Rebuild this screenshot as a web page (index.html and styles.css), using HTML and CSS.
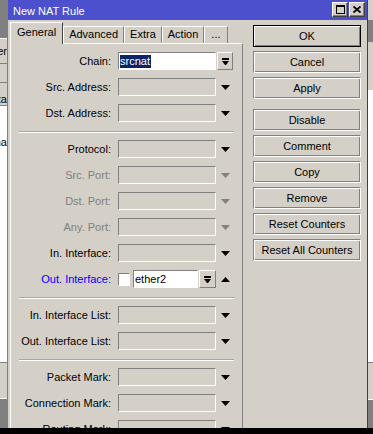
FILE: index.html
```html
<!DOCTYPE html>
<html lang="en">
  <head>
    <meta charset="UTF-8" />
    <title>New NAT Rule</title>
    <link rel="stylesheet" href="styles.css">
  </head>
  <body>
    <div class="screen">
      <div class="bg-left">
        <div class="bg-head"></div>
        <div class="bg-row">Filter</div>
        <div class="bg-band"></div>
        <div class="bg-row bg-row-low">Data</div>
        <div class="bg-list"><span class="bg-text">Dna</span></div>
        <div class="bg-panel"></div>
        <div class="bg-foot"></div>
      </div>

      <div class="window">
        <div class="titlebar">
          <span class="title">New NAT Rule</span>
          <div class="title-buttons">
            <span class="tbtn">
              <svg width="9" height="9" viewBox="0 0 9 9">
                <rect x="0" y="0" width="9" height="2" />
                <rect x="0" y="0" width="1" height="9" />
                <rect x="8" y="0" width="1" height="9" />
                <rect x="0" y="8" width="9" height="1" />
              </svg>
            </span>
            <span class="tbtn">
              <svg width="8" height="7" viewBox="0 0 8 7">
                <path d="M0.5 0.5L7.5 6.5M7.5 0.5L0.5 6.5" stroke="#000" stroke-width="1.8" />
              </svg>
            </span>
          </div>
        </div>

        <div class="body">
          <div class="editor">
            <div class="tabs">
              <span class="tab active">General</span>
              <span class="tab">Advanced</span>
              <span class="tab">Extra</span>
              <span class="tab">Action</span>
              <span class="tab tab-more">...</span>
            </div>
            <div class="panel">
              <div class="row">
                <span class="label">Chain:</span>
                <span class="field field-white"><span class="selected">srcnat</span></span>
                <span class="drop-btn">
                  <svg width="7" height="7" viewBox="0 0 7 7"><rect width="7" height="2" /><polygon points="0,3 7,3 4,7 3,7" /></svg>
                </span>
              </div>
              <div class="row">
                <span class="label">Src. Address:</span>
                <span class="field"></span>
                <svg class="arrow" width="9" height="5" viewBox="0 0 9 5"><polygon points="0,0 9,0 4.5,5" /></svg>
              </div>
              <div class="row">
                <span class="label">Dst. Address:</span>
                <span class="field"></span>
                <svg class="arrow" width="9" height="5" viewBox="0 0 9 5"><polygon points="0,0 9,0 4.5,5" /></svg>
              </div>
              <div class="sep"></div>

              <div class="row">
                <span class="label">Protocol:</span>
                <span class="field"></span>
                <svg class="arrow" width="9" height="5" viewBox="0 0 9 5"><polygon points="0,0 9,0 4.5,5" /></svg>
              </div>
              <div class="row disabled">
                <span class="label">Src. Port:</span>
                <span class="field"></span>
                <svg class="arrow" width="9" height="5" viewBox="0 0 9 5"><polygon points="0,0 9,0 4.5,5" /></svg>
              </div>
              <div class="row disabled">
                <span class="label">Dst. Port:</span>
                <span class="field"></span>
                <svg class="arrow" width="9" height="5" viewBox="0 0 9 5"><polygon points="0,0 9,0 4.5,5" /></svg>
              </div>
              <div class="row disabled">
                <span class="label">Any. Port:</span>
                <span class="field"></span>
                <svg class="arrow" width="9" height="5" viewBox="0 0 9 5"><polygon points="0,0 9,0 4.5,5" /></svg>
              </div>
              <div class="row">
                <span class="label">In. Interface:</span>
                <span class="field"></span>
                <svg class="arrow" width="9" height="5" viewBox="0 0 9 5"><polygon points="0,0 9,0 4.5,5" /></svg>
              </div>
              <div class="row">
                <span class="label label-blue">Out. Interface:</span>
                <span class="check"></span>
                <span class="field field-white field-short">ether2</span>
                <span class="drop-btn drop-btn-wide">
                  <svg width="7" height="7" viewBox="0 0 7 7"><rect width="7" height="2" /><polygon points="0,3 7,3 4,7 3,7" /></svg>
                </span>
                <svg class="arrow" width="9" height="5" viewBox="0 0 9 5"><polygon points="0,5 9,5 4.5,0" /></svg>
              </div>
              <div class="sep"></div>

              <div class="row">
                <span class="label">In. Interface List:</span>
                <span class="field"></span>
                <svg class="arrow" width="9" height="5" viewBox="0 0 9 5"><polygon points="0,0 9,0 4.5,5" /></svg>
              </div>
              <div class="row">
                <span class="label">Out. Interface List:</span>
                <span class="field"></span>
                <svg class="arrow" width="9" height="5" viewBox="0 0 9 5"><polygon points="0,0 9,0 4.5,5" /></svg>
              </div>
              <div class="sep"></div>

              <div class="row">
                <span class="label">Packet Mark:</span>
                <span class="field"></span>
                <svg class="arrow" width="9" height="5" viewBox="0 0 9 5"><polygon points="0,0 9,0 4.5,5" /></svg>
              </div>
              <div class="row">
                <span class="label">Connection Mark:</span>
                <span class="field"></span>
                <svg class="arrow" width="9" height="5" viewBox="0 0 9 5"><polygon points="0,0 9,0 4.5,5" /></svg>
              </div>
              <div class="row">
                <span class="label">Routing Mark:</span>
                <span class="field"></span>
                <svg class="arrow" width="9" height="5" viewBox="0 0 9 5"><polygon points="0,0 9,0 4.5,5" /></svg>
              </div>
            </div>
          </div>

          <div class="actions">
            <button class="btn btn-default">OK</button>
            <button class="btn">Cancel</button>
            <button class="btn">Apply</button>
            <button class="btn btn-split">Disable</button>
            <button class="btn">Comment</button>
            <button class="btn">Copy</button>
            <button class="btn">Remove</button>
            <button class="btn">Reset Counters</button>
            <button class="btn">Reset All Counters</button>
          </div>
        </div>
      </div>

      <div class="bg-right">
        <div class="bgr-top"></div>
        <div class="bgr-dark"></div>
        <div class="bgr-grey"></div>
        <div class="bgr-list"></div>
        <div class="bgr-panel"></div>
        <div class="bg-foot"></div>
      </div>
    </div>
    <div class="taskbar"></div>
  </body>
</html>
```

FILE: styles.css
```css
body {
  margin: 0;
  background: #808080;
  font-family: "Liberation Sans", Arial, sans-serif;
  font-size: 11px;
  color: #000;
}
.screen {
  display: flex;
  height: 428px;
  overflow: hidden;
}
.taskbar {
  height: 6px;
  background: #000;
}

/* desktop behind the dialog */
.bg-left,
.bg-right {
  display: flex;
  flex-direction: column;
  overflow: hidden;
  white-space: nowrap;
}
.bg-left {
  width: 7px;
}
.bg-right {
  width: 5px;
}
.bg-head {
  height: 38px;
  background: #808080;
}
.bg-row {
  height: 24px;
  display: flex;
  justify-content: flex-end;
  align-items: center;
  background: #d4d0c8;
  border-top: 1px solid #fff;
}
.bg-row-low {
  border-top: 1px solid #808080;
  border-bottom: 1px solid #808080;
  height: 22px;
  align-items: flex-end;
}
.bg-band {
  height: 18px;
  background: #d4d0c8;
  border-top: 1px solid #808080;
}
.bg-list {
  height: 256px;
  background: #fff;
  display: flex;
  justify-content: flex-end;
  align-items: flex-start;
}
.bg-text {
  margin-top: 30px;
}
.bg-panel {
  height: 35px;
  background: #d4d0c8;
  border-top: 1px solid #808080;
}
.bg-foot {
  flex: 1;
  background: #808080;
  border-top: 1px solid #fff;
}
.bgr-top {
  height: 20px;
  background: #d4d0c8;
}
.bgr-dark {
  height: 22px;
  background: #808080;
}
.bgr-grey {
  height: 48px;
  background: #d4d0c8;
}
.bgr-list {
  height: 272px;
  background: #fff;
}
.bgr-panel {
  height: 36px;
  background: #d4d0c8;
  border-top: 1px solid #808080;
}

/* dialog */
.window {
  width: 359px;
  border-left: 1px solid #808080;
  border-right: 1px solid #404040;
  background: #d4d0c8;
  display: flex;
  flex-direction: column;
  overflow: hidden;
}
.titlebar {
  height: 20px;
  flex-shrink: 0;
  background: #4c50cc;
  display: flex;
  align-items: center;
  justify-content: space-between;
  padding: 0 2px 0 5px;
}
.title {
  color: #fff;
  padding-top: 1px;
}
.title-buttons {
  display: flex;
  gap: 1px;
  margin-top: -1px;
}
.tbtn {
  width: 16px;
  height: 15px;
  box-sizing: border-box;
  background: #d4d0c8;
  border: 1px solid;
  border-color: #fff #404040 #404040 #fff;
  box-shadow: inset -1px -1px #808080;
  display: flex;
  align-items: center;
  justify-content: center;
}
.body {
  flex: 1;
  display: flex;
  padding: 2px 0 0 2px;
  min-height: 0;
}
.editor {
  width: 233px;
  display: flex;
  flex-direction: column;
}
.tabs {
  height: 21px;
  display: flex;
  align-items: flex-end;
  flex-shrink: 0;
}
.tab {
  height: 17px;
  box-sizing: border-box;
  padding: 1px 5px 0 5px;
  line-height: 13px;
  border-top: 1px solid #fff;
  border-left: 1px solid #fff;
  border-right: 1px solid #808080;
  background: #d4d0c8;
}
.tab.active {
  height: 22px;
  margin-bottom: -1px;
  padding: 3px 6px 0 6px;
  border-right-color: #404040;
  position: relative;
  z-index: 1;
}
.tab-more {
  padding: 1px 6px 0 6px;
}
.panel {
  flex: 1;
  display: flex;
  flex-direction: column;
  border-top: 1px solid #fff;
  border-left: 1px solid #fff;
  border-right: 1px solid #808080;
  padding-top: 8px;
}
.row {
  height: 18px;
  flex-shrink: 0;
  margin-bottom: 8px;
  display: flex;
  align-items: center;
}
.label {
  width: 100px;
  margin-right: 7px;
  text-align: right;
  white-space: nowrap;
}
.label-blue {
  color: #0000ff;
}
.disabled .label {
  color: #808080;
}
.disabled .arrow {
  fill: #808080;
}
.field {
  width: 98px;
  height: 18px;
  box-sizing: border-box;
  border: 1px solid;
  border-color: #808080 #fff #fff #808080;
  display: flex;
  align-items: center;
}
.field-white {
  background: #fff;
  padding-left: 1px;
}
.field-short {
  width: 65px;
}
.selected {
  background: #0a246a;
  color: #fff;
  line-height: 13px;
  padding-right: 1px;
}
.check {
  width: 12px;
  height: 13px;
  box-sizing: border-box;
  margin-right: 3px;
  background: #fff;
  border: 1px solid;
  border-color: #808080 #fff #fff #808080;
}
.drop-btn {
  width: 16px;
  height: 18px;
  box-sizing: border-box;
  margin-left: 1px;
  border: 1px solid;
  border-color: #fff #808080 #808080 #fff;
  display: flex;
  align-items: center;
  justify-content: center;
}
.drop-btn-wide {
  width: 17px;
}
.arrow {
  margin-left: 5px;
  fill: #000;
}
.sep {
  height: 0;
  flex-shrink: 0;
  margin: 1px 8px 7px;
  border-top: 1px solid #aaa69e;
  border-bottom: 1px solid #fff;
}

/* buttons on the right */
.actions {
  width: 108px;
  margin: 3px 0 0 10px;
  display: flex;
  flex-direction: column;
  gap: 4px;
}
.btn {
  height: 22px;
  padding: 0;
  background: #d4d0c8;
  font-family: "Liberation Sans", Arial, sans-serif;
  font-size: 11px;
  color: #000;
  border: 1px solid #808080;
  border-right-color: #fff;
  border-bottom-color: #fff;
  box-shadow: inset 1px 1px #fff, inset -1px -1px #808080;
}
.btn-default {
  border: 1px solid #000;
  box-shadow: inset 1px 1px #fff, inset -1px -1px #808080;
}
.btn-split {
  margin-top: 6px;
}
```
